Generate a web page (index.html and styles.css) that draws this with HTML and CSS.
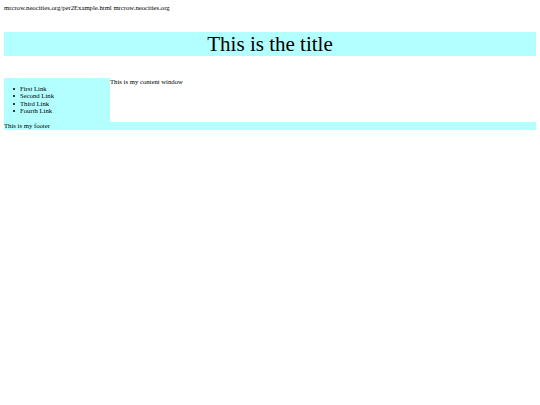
FILE: index.html
```html
<!DOCTYPE html>
<html>
<head>
<meta charset="utf-8">
<title>per2Example</title>
<link rel="stylesheet" href="styles.css">
</head>
<body>
<div class="header-line">mrcrow.neocities.org/per2Example.html mrcrow.neocities.org</div>
<h1 class="title">This is the title</h1>
<div class="row">
  <nav class="sidebar">
    <ul class="links">
      <li>First Link</li>
      <li>Second Link</li>
      <li>Third Link</li>
      <li>Fourth Link</li>
    </ul>
  </nav>
  <main class="content">This is my content window</main>
</div>
<footer class="footer">This is my footer</footer>
</body>
</html>
```

FILE: styles.css
```css
html, body {
  background: #ffffff;
}
body {
  margin: 4px;
  font-family: "Liberation Serif", "Times New Roman", serif;
  font-size: 6.7px;
  line-height: 7.6px;
  color: #000000;
}
.header-line {
  height: 8px;
}
.title {
  margin: 20px 0 22px 0;
  background: #b3ffff;
  font-weight: normal;
  font-size: 21px;
  line-height: 24px;
  text-align: center;
}
.row {
  display: flex;
  align-items: stretch;
}
.sidebar {
  width: 106px;
  background: #b3ffff;
}
.links {
  margin: 7px 0;
  padding-left: 9px;
  list-style: none;
}
.links li {
  display: flex;
  align-items: center;
  line-height: 7.4px;
}
.links li::before {
  content: "";
  width: 2px;
  height: 2px;
  border-radius: 50%;
  background: #000000;
  margin-right: 5px;
}
.content {
  flex: 1;
}
.footer {
  background: #b3ffff;
  height: 8px;
}
```
